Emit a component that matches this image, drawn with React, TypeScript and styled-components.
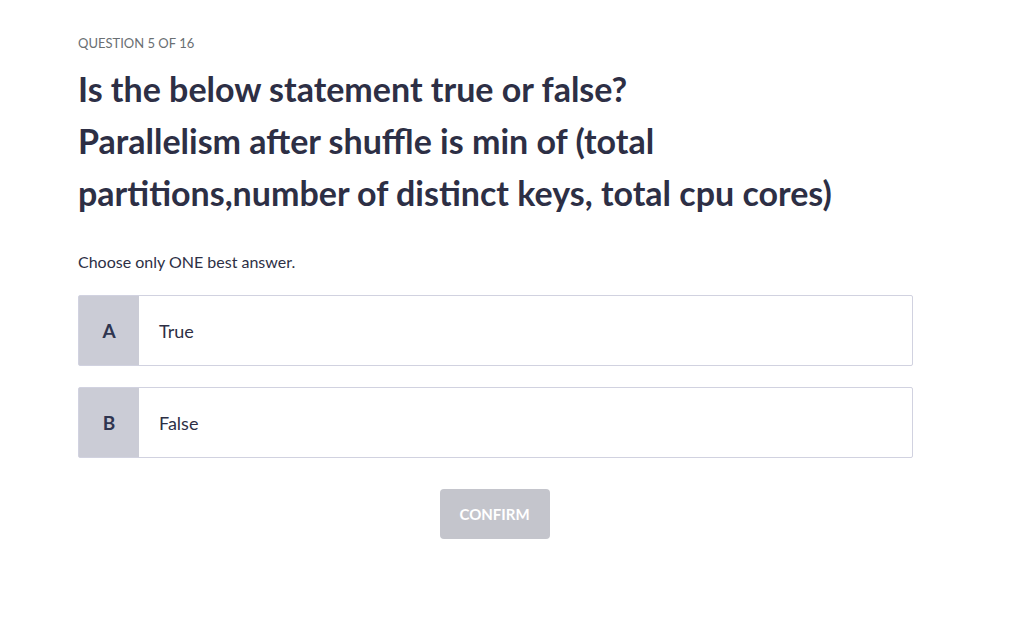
import React from "react";
import styled, { createGlobalStyle } from "styled-components";

const Global = createGlobalStyle`
  html, body { margin: 0; padding: 0; background: #ffffff; }
  body { font-family: "Lato", "Liberation Sans", sans-serif; color: #2d2f45; }
  * { box-sizing: border-box; }
`;

const Page = styled.main`
  width: 1021px;
  padding: 34px 0 0 78px;
`;

const Quiz = styled.section`
  width: 835px;
  display: flex;
  flex-direction: column;
`;

const Counter = styled.div`
  font-size: 13px;
  line-height: 18px;
  color: #6a6f73;
  text-transform: uppercase;
`;

const Heading = styled.h1`
  margin: 11px 0 0;
  width: 800px;
  font-size: 34px;
  line-height: 52px;
  font-weight: 700;
  color: #2d2f45;
`;

const Hint = styled.p`
  margin: 32px 0 0;
  font-size: 16px;
  line-height: 22px;
  color: #2d2f45;
`;

const Options = styled.div`
  margin-top: 22px;
  display: flex;
  flex-direction: column;
  gap: 21px;
`;

const Option = styled.button`
  display: flex;
  align-items: stretch;
  width: 100%;
  height: 71px;
  padding: 0;
  border: 1px solid #d1d2e0;
  border-radius: 2px;
  background: #ffffff;
  cursor: pointer;
  font-family: inherit;
  text-align: left;
`;

const Letter = styled.span`
  width: 60px;
  flex: none;
  display: flex;
  align-items: center;
  justify-content: center;
  background: #cbccd6;
  font-size: 19px;
  font-weight: 700;
  color: #2f3550;
`;

const Label = styled.span`
  display: flex;
  align-items: center;
  padding-left: 20px;
  font-size: 18px;
  color: #2d2f45;
`;

const Footer = styled.div`
  display: flex;
  justify-content: center;
  margin-top: 31px;
`;

const Confirm = styled.button`
  width: 110px;
  height: 50px;
  border: none;
  border-radius: 4px;
  background: #c4c5cc;
  color: #ffffff;
  font-family: inherit;
  font-size: 15px;
  font-weight: 700;
  text-transform: uppercase;
  transform: translateX(-1px);
`;

export default function App() {
  return (
    <>
      <Global />
      <Page>
        <Quiz>
          <Counter>Question 5 of 16</Counter>
          <Heading>
            Is the below statement true or false?
            <br />
            Parallelism after shuffle is min of (total partitions,number of distinct keys, total cpu cores)
          </Heading>
          <Hint>Choose only ONE best answer.</Hint>
          <Options>
            <Option>
              <Letter>A</Letter>
              <Label>True</Label>
            </Option>
            <Option>
              <Letter>B</Letter>
              <Label>False</Label>
            </Option>
          </Options>
          <Footer>
            <Confirm disabled>Confirm</Confirm>
          </Footer>
        </Quiz>
      </Page>
    </>
  );
}
